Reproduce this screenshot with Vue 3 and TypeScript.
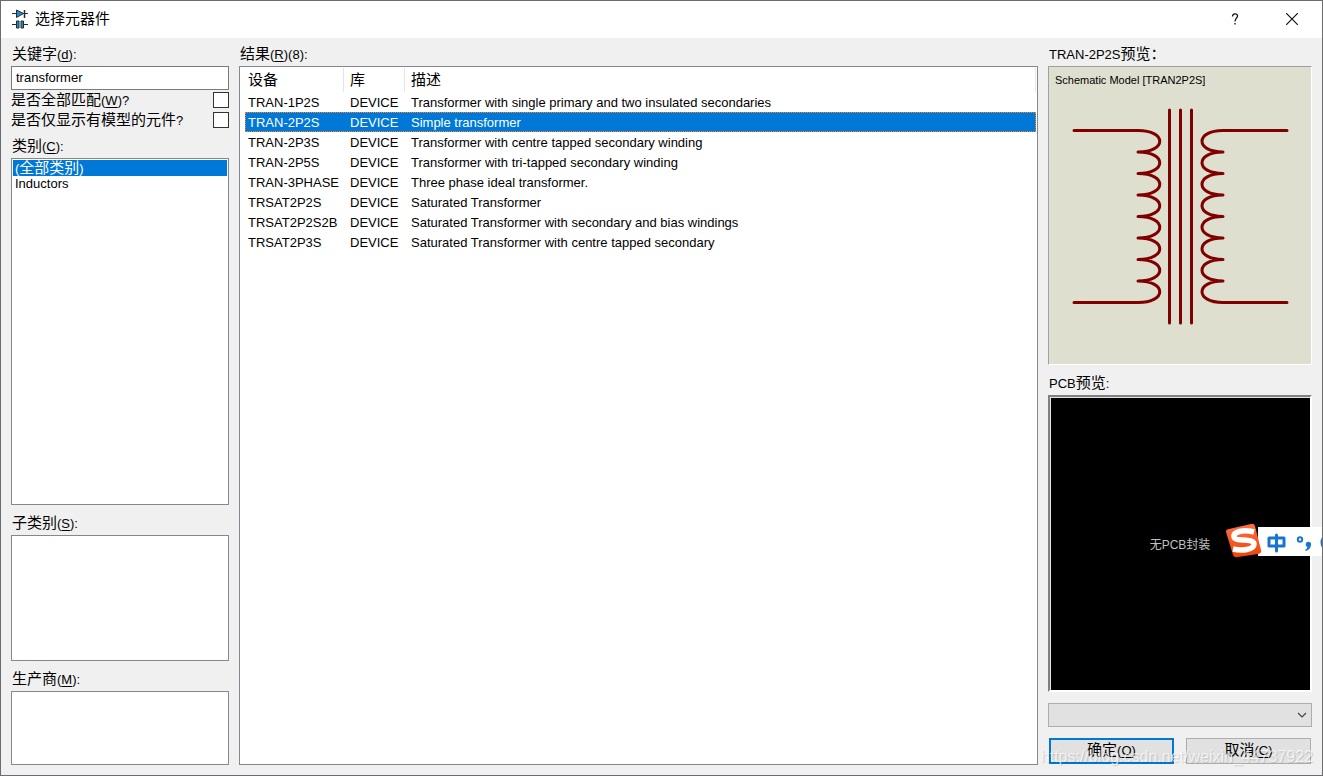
<script setup lang="ts">
import { ref } from 'vue'

interface Device {
  name: string
  library: string
  description: string
}

const keyword = ref('transformer')
const matchAll = ref(false)
const modelsOnly = ref(false)
const footprint = ref('')
const categories = ref<string[]>(['Inductors'])
const selectedCategory = ref('')
const selected = ref('TRAN-2P2S')

const devices: Device[] = [
  { name: 'TRAN-1P2S', library: 'DEVICE', description: 'Transformer with single primary and two insulated secondaries' },
  { name: 'TRAN-2P2S', library: 'DEVICE', description: 'Simple transformer' },
  { name: 'TRAN-2P3S', library: 'DEVICE', description: 'Transformer with centre tapped secondary winding' },
  { name: 'TRAN-2P5S', library: 'DEVICE', description: 'Transformer with tri-tapped secondary winding' },
  { name: 'TRAN-3PHASE', library: 'DEVICE', description: 'Three phase ideal transformer.' },
  { name: 'TRSAT2P2S', library: 'DEVICE', description: 'Saturated Transformer' },
  { name: 'TRSAT2P2S2B', library: 'DEVICE', description: 'Saturated Transformer with secondary and bias windings' },
  { name: 'TRSAT2P3S', library: 'DEVICE', description: 'Saturated Transformer with centre tapped secondary' },
]

// Eight half-loops per winding, each bulging towards the core.
function winding(lead: number, tip: number, bulge: number): string {
  const parts: string[] = [`M${lead} 63.5H${tip}`]
  const pitch = 21.5
  for (let i = 0; i < 8; i++) {
    const top = 63.5 + i * pitch
    parts.push(`C${bulge} ${top} ${bulge} ${top + pitch} ${tip} ${top + pitch}`)
  }
  parts.push(`H${lead}`)
  return parts.join('')
}

const primary = winding(25, 89, 118)
const secondary = winding(238, 174, 146)
</script>

<template>
  <div class="dialog">
    <header class="titlebar">
      <svg class="app-icon" viewBox="0 0 16 20" aria-hidden="true">
        <g stroke="#2a2a2a" stroke-width="1" fill="#1c8fd8">
          <path d="M0 4.500H16M0 15.500H4.500M11.500 15.500H16" />
          <path d="M4.500 1V8.500L11.500 4.500Z" />
          <path d="M12.500 1V9" stroke-width="1.500" />
          <path d="M4.500 12V19H7V12ZM9 12V19H11.500V12Z" />
        </g>
      </svg>
      <h1>选择元器件</h1>
      <button class="caption-btn" type="button" aria-label="Help">
        <svg viewBox="0 0 12 14" width="12" height="14"><path d="M3.500 4.500C3.500 1 8.500 1 8.500 4C8.500 6 6 6.500 6 9.500M6 11V12.500" fill="none" stroke="#111" stroke-width="1.300" /></svg>
      </button>
      <button class="caption-btn" type="button" aria-label="Close">
        <svg viewBox="0 0 12 12" width="12" height="12"><path d="M0 0L12 12M12 0L0 12" stroke="#111" stroke-width="1.200" /></svg>
      </button>
    </header>

    <main class="body">
      <section class="column">
        <label class="caption" for="keyword">关键字<span class="latin">(<u>d</u>):</span></label>
        <input id="keyword" v-model="keyword" class="keyword" type="text" />
        <div class="check-row">
          <label for="match-all">是否全部匹配<span class="latin">(<u>W</u>)?</span></label>
          <input id="match-all" v-model="matchAll" type="checkbox" />
        </div>
        <div class="check-row">
          <label for="models-only">是否仅显示有模型的元件<span class="latin">?</span></label>
          <input id="models-only" v-model="modelsOnly" type="checkbox" />
        </div>
        <span id="category-label" class="caption">类别<span class="latin">(<u>C</u>):</span></span>
        <ul class="listbox grow" role="listbox" aria-labelledby="category-label">
          <li class="item" :class="{ active: selectedCategory === '' }" role="option" :aria-selected="selectedCategory === ''" @click="selectedCategory = ''"><span class="latin">(</span>全部类别<span class="latin">)</span></li>
          <li v-for="c in categories" :key="c" class="item latin" :class="{ active: selectedCategory === c }" role="option" :aria-selected="selectedCategory === c" @click="selectedCategory = c">{{ c }}</li>
        </ul>
        <span id="sub-label" class="caption spaced">子类别<span class="latin">(<u>S</u>):</span></span>
        <ul class="listbox sub" role="listbox" aria-labelledby="sub-label"></ul>
        <span id="maker-label" class="caption spaced">生产商<span class="latin">(<u>M</u>):</span></span>
        <ul class="listbox maker" role="listbox" aria-labelledby="maker-label"></ul>
      </section>

      <section class="column">
        <span class="caption">结果<span class="latin">(<u>R</u>)(8):</span></span>
        <div class="results">
          <table>
            <colgroup><col class="c-name" /><col class="c-lib" /><col /></colgroup>
            <thead>
              <tr><th>设备</th><th>库</th><th>描述</th></tr>
            </thead>
            <tbody>
              <tr v-for="d in devices" :key="d.name" :class="{ active: selected === d.name }" @click="selected = d.name">
                <td>{{ d.name }}</td>
                <td>{{ d.library }}</td>
                <td>{{ d.description }}</td>
              </tr>
            </tbody>
          </table>
        </div>
      </section>

      <section class="column">
        <span class="caption"><span class="latin">{{ selected }}</span>预览：</span>
        <div class="schematic">
          <p>Schematic Model [TRAN2P2S]</p>
          <svg viewBox="0 0 262 297" role="img" aria-label="TRAN-2P2S">
            <g fill="none" stroke="#800000" stroke-width="3" stroke-linecap="round" stroke-linejoin="round">
              <path :d="primary" />
              <path :d="secondary" />
              <path d="M120.500 43V256M131.500 43V256M142.500 43V256" />
            </g>
          </svg>
        </div>
        <span class="caption spaced"><span class="latin">PCB</span>预览<span class="latin">:</span></span>
        <div class="pcb">
          <span>无PCB封装</span>
          <div class="ime">
            <svg class="ime-logo" viewBox="0 0 36 36" aria-hidden="true">
              <defs>
                <linearGradient id="ime-fill" x1="0" y1="0" x2="0" y2="1">
                  <stop offset="0" stop-color="#ff7040" />
                  <stop offset="1" stop-color="#ee4408" />
                </linearGradient>
              </defs>
              <path d="M3 6L25 1Q28 0 29 3L35 27Q36 30 32 31L12 34Q8 35 7 32L0 9Q0 6 3 6Z" fill="url(#ime-fill)" />
              <path d="M28 9C17 6 7 9 8 14C9 19 28 15 28 21C28 27 16 28 7 26" fill="none" stroke="#fff" stroke-width="5.500" />
            </svg>
            <svg class="ime-tools" viewBox="0 0 66 29" aria-hidden="true">
              <g fill="none" stroke="#1874cd" stroke-width="3" stroke-linecap="round" stroke-linejoin="round">
                <path d="M11 11H26V19H11ZM18.500 8V24" />
                <circle cx="42" cy="12.500" r="2.200" stroke-width="2" />
                <circle cx="72" cy="15.500" r="8" />
              </g>
              <path d="M48 16Q50 13.500 53 16Q54 21 48 24L47 23Q49 22 49.500 20Q47 19 48 16Z" fill="#1874cd" />
            </svg>
          </div>
        </div>
        <div class="combo">
          <select v-model="footprint" aria-label="PCB封装"><option value=""></option></select>
          <svg viewBox="0 0 10 6" aria-hidden="true"><path d="M1 1L5 5L9 1" fill="none" stroke="#444" stroke-width="1.200" /></svg>
        </div>
        <div class="actions">
          <button class="action primary" type="button">确定<span class="latin">(<u>O</u>)</span></button>
          <button class="action" type="button">取消<span class="latin">(<u>C</u>)</span></button>
        </div>
      </section>
    </main>
    <div class="watermark">https://blog.csdn.net/weixin_44737922</div>
  </div>
</template>

<style>
html, body, #app { height: 100%; }
</style>

<style scoped>
* { box-sizing: border-box; }
.dialog {
  position: relative;
  display: flex;
  flex-direction: column;
  min-height: 100%;
  overflow: hidden;
  border: 1px solid #6b6b70;
  background: #f0f0f0;
  color: #000;
  font-family: "Liberation Sans", "Noto Sans CJK SC", sans-serif;
  font-size: 15px;
}
.latin { font-size: 13px; }
u { text-underline-offset: 2px; }
.titlebar { display: flex; align-items: center; height: 37px; padding: 0 2px 1px 11px; background: #fff; }
.app-icon { width: 16px; height: 20px; margin-right: 7px; }
h1 { flex: 1; margin: 0; font-size: 15px; font-weight: 400; line-height: 20px; }
.caption-btn { display: flex; align-items: center; justify-content: center; width: 57px; height: 36px; padding: 0; border: 0; background: none; }
.body { flex: 1; display: grid; grid-template-columns: 218px minmax(0, 1fr) 264px; gap: 10px; padding: 0 10px 10px; }
.column { display: flex; flex-direction: column; min-width: 0; }
.caption { flex: none; height: 24px; margin-top: 4px; padding-left: 1px; line-height: 24px; white-space: nowrap; }
.spaced { margin-top: 6px; }
.keyword { height: 24px; padding: 0 4px 2px; border: 1px solid #7a7a7a; background: #fff; font: 13px "Liberation Sans", sans-serif; color: #000; }
.check-row { display: flex; align-items: center; justify-content: space-between; height: 20px; line-height: 20px; }
.check-row input { appearance: none; width: 16px; height: 16px; margin: 0; border: 1px solid #333; background: #fff; }
.check-row input:checked { background: #0078d7; }
.listbox { flex: none; margin: 0; padding: 1px; border: 1px solid #828790; background: #fff; list-style: none; }
.grow { flex: 1; }
.sub { height: 126px; }
.maker { height: 74px; }
.item { height: 16px; padding-left: 2px; line-height: 16px; }
.item.active { background: #0078d7; color: #fff; }
.results { flex: 1; padding: 1px 1px 1px 5px; border: 1px solid #828790; background: #fff; }
table { width: 100%; border-collapse: separate; border-spacing: 0; table-layout: fixed; }
.c-name { width: 99px; }
.c-lib { width: 61px; }
th { height: 24px; padding: 0 0 0 6px; border-right: 1px solid #e5e5e5; font-size: 15px; font-weight: 400; line-height: 24px; text-align: left; }
td { height: 20px; padding: 1px 0 0 6px; font-size: 13px; line-height: 19px; white-space: nowrap; }
th:first-child, td:first-child { padding-left: 3px; }
tr.active { background: #0078d7; color: #fff; outline: 1px dotted #ff8728; outline-offset: -1px; }
.schematic { position: relative; height: 299px; border: 1px solid; border-color: #a0a0a0 #fff #fff #a0a0a0; background: #dfdfcf; }
.schematic p { position: absolute; top: 5px; left: 6px; margin: 0; font-size: 11px; line-height: 16px; }
.schematic svg { display: block; width: 100%; height: 100%; }
.pcb { position: relative; display: flex; flex: 1; align-items: center; justify-content: center; border: 2px solid; border-color: #808080 #fff #fff #808080; background: #000; color: #c0c0c0; font-size: 12px; box-shadow: inset 1px 1px 0 #e3e3e3; }
.ime { position: absolute; top: 126px; right: -14px; display: flex; align-items: center; }
.ime-logo { position: relative; z-index: 1; width: 36px; height: 36px; margin-right: -4px; }
.ime-tools { width: 66px; height: 29px; background: #fff; }
.combo { position: relative; flex: none; height: 24px; margin-top: 11px; }
.combo select { appearance: none; display: block; width: 100%; height: 100%; border: 1px solid #adadad; border-radius: 0; background: #e1e1e1; }
.combo svg { position: absolute; top: 9px; right: 5px; width: 10px; height: 6px; pointer-events: none; }
.actions { display: grid; grid-template-columns: 1fr 1fr; gap: 12px; margin-top: 11px; padding: 0 1px 1px; }
.action { height: 26px; padding: 0 0 2px; border: 1px solid #adadad; background: #e1e1e1; color: #000; font: inherit; line-height: 20px; }
.action.primary { border: 2px solid #0078d7; }
.watermark { position: absolute; right: 9px; bottom: 9px; color: rgba(255, 255, 255, 0.7); font-size: 16px; line-height: 18px; pointer-events: none; text-shadow: 1px 1px 1px rgba(0, 0, 0, 0.15); }
</style>
